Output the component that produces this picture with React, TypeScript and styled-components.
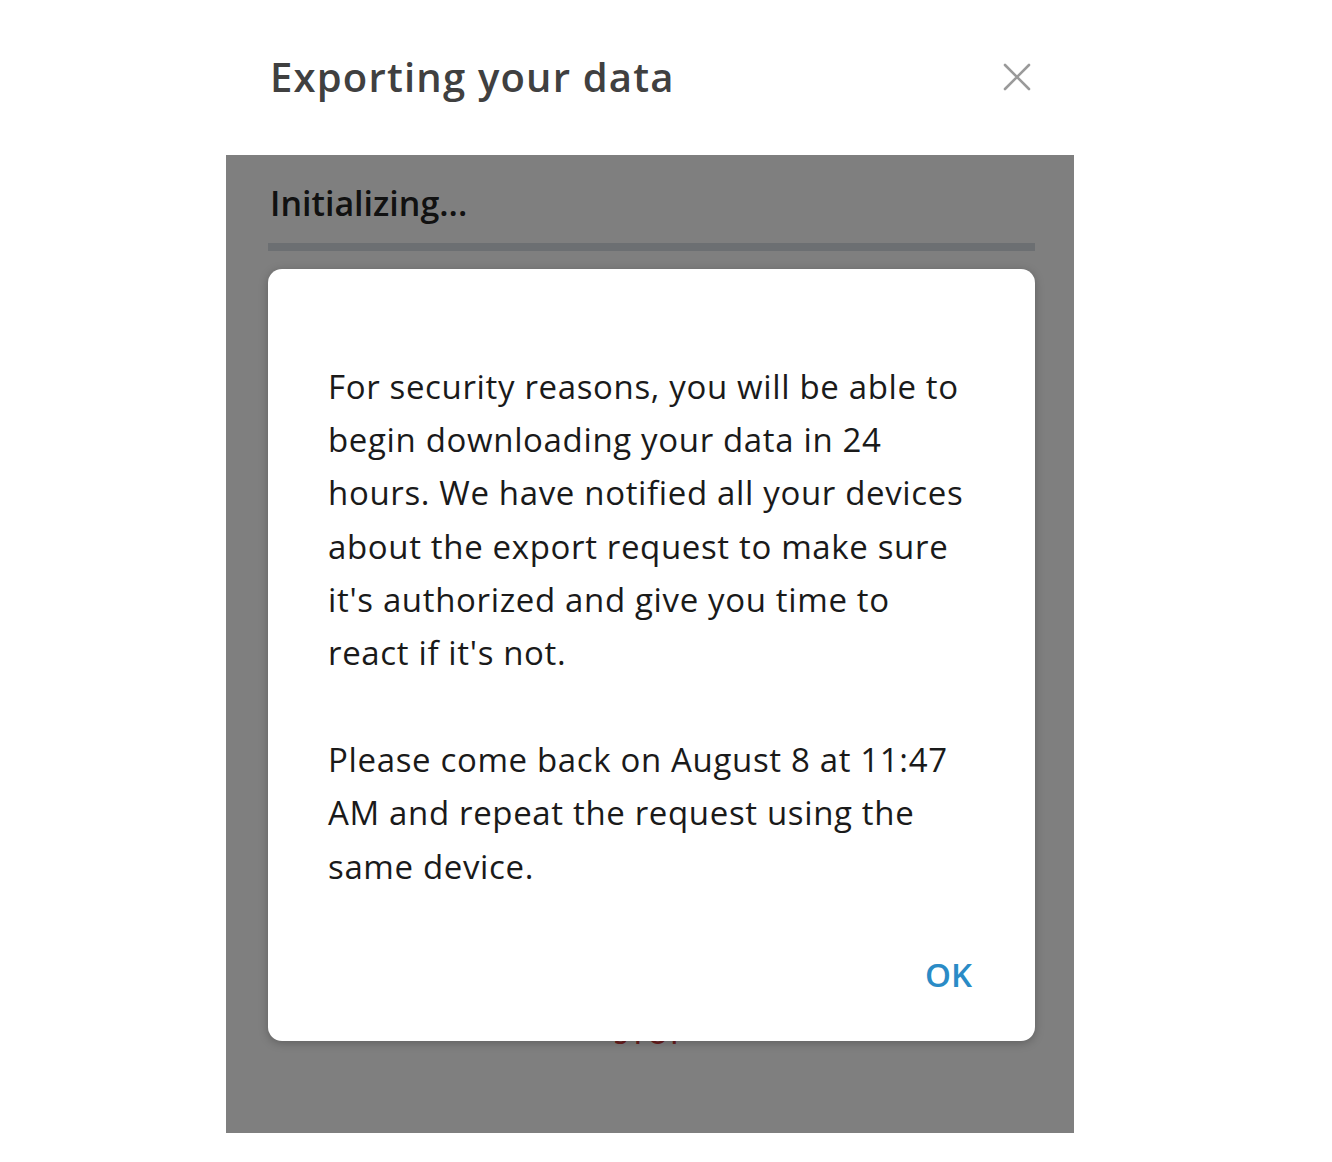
import React from 'react'
import styled, { createGlobalStyle } from 'styled-components'

const GlobalStyle = createGlobalStyle`
  html, body {
    margin: 0;
    padding: 0;
    background: #FFFFFF;
    font-family: 'Open Sans', 'Liberation Sans', sans-serif;
  }
`
const Window = styled.div`
  width: 848px;
  margin-left: 226px;
  display: flex;
  flex-direction: column;
`
const Header = styled.div`
  height: 155px;
  display: flex;
  align-items: center;
  justify-content: space-between;
  padding: 0 41px 0 44px;
  box-sizing: border-box;
`
const Title = styled.div`
  font-size: 40px;
  font-weight: 600;
  letter-spacing: 1.2px;
  color: #404040;
  margin-top: -2px;
`
const CloseButton = styled.div`
  width: 32px;
  height: 32px;
  display: flex;
  align-items: center;
  justify-content: center;
  cursor: pointer;
  margin-top: -1px;
`
const Content = styled.div`
  position: relative;
  height: 978px;
  padding: 24px 39px 0 42px;
  box-sizing: border-box;
  display: flex;
  flex-direction: column;
`
const Status = styled.div`
  font-size: 34px;
  font-weight: 600;
  color: #222;
  padding-left: 2px;
  line-height: 48px;
`
const Progress = styled.div`
  height: 8px;
  margin-top: 16px;
  background: #d9dfe5;
`
const StopButton = styled.div`
  margin-top: auto;
  margin-bottom: 84px;
  align-self: center;
  font-size: 25px;
  line-height: 30px;
  font-weight: 600;
  color: #d23c3c;
  letter-spacing: 3px;
`
const Overlay = styled.div`
  position: absolute;
  inset: 0;
  background: rgba(0, 0, 0, 0.5);
  display: flex;
  justify-content: center;
  padding: 114px 39px 0 42px;
`
const Dialog = styled.div`
  width: 767px;
  height: 772px;
  box-sizing: border-box;
  background: #FFFFFF;
  border-radius: 14px;
  box-shadow: 0 2px 10px rgba(0, 0, 0, 0.25);
  padding: 91px 60px 42px 60px;
  display: flex;
  flex-direction: column;
`
const Message = styled.p`
  margin: 0 0 54px;
  width: 645px;
  font-size: 33px;
  letter-spacing: 0.65px;
  line-height: 53.2px;
  color: #1a1a1a;
`
const Actions = styled.div`
  margin-top: auto;
  padding-right: 3px;
  display: flex;
  justify-content: flex-end;
`
const OkButton = styled.div`
  font-size: 33px;
  font-weight: 600;
  color: #2a8bc6;
  line-height: 48px;
  cursor: pointer;
`

export default function App() {
  return (
    <>
      <GlobalStyle />
      <Window>
        <Header>
          <Title>Exporting your data</Title>
          <CloseButton>
            <svg width="28" height="28" viewBox="0 0 28 28">
              <path d="M2 2 L26 26 M26 2 L2 26" stroke="#9a9a9a" strokeWidth="2.6" strokeLinecap="round" />
            </svg>
          </CloseButton>
        </Header>
        <Content>
          <Status>Initializing...</Status>
          <Progress />
          <StopButton>STOP</StopButton>
          <Overlay>
            <Dialog>
              <Message>
                For security reasons, you will be able to begin downloading your data in 24 hours. We have notified all your devices about the export request to make sure it's authorized and give you time to react if it's not.
              </Message>
              <Message>
                Please come back on August 8 at 11:47 AM and repeat the request using the same device.
              </Message>
              <Actions>
                <OkButton>OK</OkButton>
              </Actions>
            </Dialog>
          </Overlay>
        </Content>
      </Window>
    </>
  )
}
